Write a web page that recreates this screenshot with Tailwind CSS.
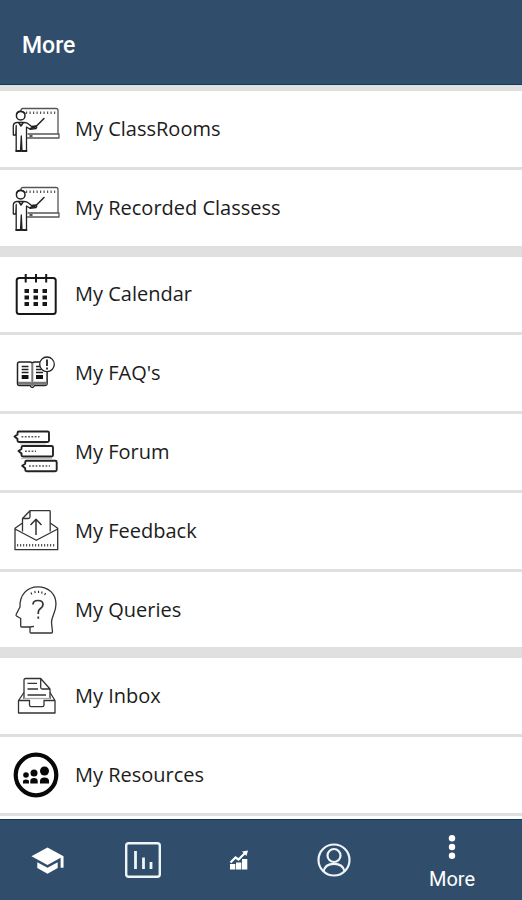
<!DOCTYPE html>
<html lang="en">
<head>
    <meta charset="UTF-8">
    <meta name="viewport" content="width=device-width, initial-scale=1.0">
    <script src="https://cdn.jsdelivr.net/npm/@tailwindcss/browser@4"></script>
    <title>More</title>
</head>
<body class="flex flex-col min-h-screen bg-white text-[#1c1c1c] font-['Open_Sans',sans-serif]">
<header class="flex items-center h-[85px] px-[22px] pt-2 bg-[#304e6b] border-b border-[#123a5c]">
    <h1 class="text-[23px] leading-7 font-medium text-white font-['Roboto',sans-serif]">More</h1>
</header>

<main class="flex flex-col flex-1 pb-[3px] bg-white border-t-6 border-[#e0dfdf]">
    <!-- Classes -->
    <a href="#" class="flex flex-1 items-center gap-[15px] pl-3 border-b-3 border-[#e0e0e0]">
        <svg class="size-12" viewBox="0 0 48 48" fill="none" stroke="#222" stroke-width="1.3" stroke-linejoin="round" stroke-linecap="round">
            <path d="M9 5.5C9 4 10 3.5 11 3.5h33q2 0 2 2V29M16 29h31v4H15.500" stroke="#555"/>
            <path d="M14 7.700h30" stroke-width="2.500" stroke-dasharray="1.2 2.300" stroke="#555" stroke-linecap="butt"/>
            <path d="M18 31h2" stroke-width="1.500"/>
            <circle cx="8.700" cy="10.700" r="4.300" fill="#fff" stroke-width="1.500"/>
            <path d="M4.500 9q1.200-3 4.200-2.800t4.300 2.300" stroke-width="1.500"/>
            <path d="M5 17.500h7q3 0 4.500 1.500l3 2.500l4.500-.5q1.500.8 0 2.500l-6 .8l-3.500-2.300V46h-4.500l-.7-15l-.8 15H4.200V20.500l-.4 9.500H1.300v-9q0-3 3.700-3.500z" fill="#fff"/>
            <path d="M7 18l2 3l2-3M20 22.200l4-.7l8-8M18 23.500l5-1" stroke-width="1.500"/>
            <path d="M4.200 46h4.300M10 46h4.500" stroke-width="1.800"/>
        </svg>
        <span class="text-[20px] leading-7">My ClassRooms</span>
    </a>
    <a href="#" class="flex flex-1 items-center gap-[15px] pl-3 border-b-11 border-[#e0e0e0]">
        <svg class="size-12" viewBox="0 0 48 48" fill="none" stroke="#222" stroke-width="1.3" stroke-linejoin="round" stroke-linecap="round">
            <path d="M9 5.5C9 4 10 3.5 11 3.5h33q2 0 2 2V29M16 29h31v4H15.500" stroke="#555"/>
            <path d="M14 7.700h30" stroke-width="2.500" stroke-dasharray="1.2 2.300" stroke="#555" stroke-linecap="butt"/>
            <path d="M18 31h2" stroke-width="1.500"/>
            <circle cx="8.700" cy="10.700" r="4.300" fill="#fff" stroke-width="1.500"/>
            <path d="M4.500 9q1.200-3 4.200-2.800t4.300 2.300" stroke-width="1.500"/>
            <path d="M5 17.500h7q3 0 4.500 1.500l3 2.500l4.500-.5q1.500.8 0 2.500l-6 .8l-3.500-2.300V46h-4.500l-.7-15l-.8 15H4.200V20.500l-.4 9.500H1.300v-9q0-3 3.700-3.500z" fill="#fff"/>
            <path d="M7 18l2 3l2-3M20 22.200l4-.7l8-8M18 23.500l5-1" stroke-width="1.500"/>
            <path d="M4.200 46h4.300M10 46h4.500" stroke-width="1.800"/>
        </svg>
        <span class="text-[20px] leading-7">My Recorded Classess</span>
    </a>

    <!-- Communication -->
    <a href="#" class="flex flex-1 items-center gap-[15px] pl-3 border-b-3 border-[#e0e0e0]">
        <svg class="size-12" viewBox="0 0 48 48" fill="none" stroke="#181818" stroke-width="2">
            <rect x="4.700" y="8" width="39" height="36" rx="2.500"/>
            <path d="M13.700 4V12.500M24 4V12.500M34.200 4V12.500"/>
            <path d="M12.500 21h22.500M12.500 27.500h22.500M12.500 34h22.500" stroke-width="4" stroke-dasharray="4.500 4.500"/>
        </svg>
        <span class="text-[20px] leading-7">My Calendar</span>
    </a>
    <a href="#" class="flex flex-1 items-center gap-[15px] pl-3 border-b-3 border-[#e0e0e0]">
        <svg class="size-12" viewBox="0 0 48 48" fill="none" stroke="#222" stroke-width="1.500">
            <path d="M20.300 14q-1-1-3-1H7.500q-2 0-2 2v19.500q0 2 2 2H18q1 2 2.300 2t2.300-2h10q2.500 0 2.500-2V14.500q0-1.500-2-1.500h-10q-2 0-2.800 1z"/>
            <path d="M6 33.500h12.500l1.800 1.500l1.800-1.500H35M6 35h12.500l1.800 1.500l1.800-1.500H35" stroke="#777"/>
            <path d="M20.300 14v22" stroke="#777" stroke-width="2"/>
            <path d="M9.700 17.500h6.800M9.700 20.500h6.800M9.700 23.500h6.800M24 17.500h4M24 20.500h5M24 23.500h7" stroke-width="1.300"/>
            <path d="M9.700 28h6.800M24 28h7" stroke="#111" stroke-width="4"/>
            <circle cx="35" cy="15.300" r="7.300" fill="#fff" stroke-width="1.300"/>
            <path d="M35 10.500v6.500M35 18.500v2" stroke-width="1.800"/>
        </svg>
        <span class="text-[20px] leading-7">My FAQ's</span>
    </a>
    <a href="#" class="flex flex-1 items-center gap-[15px] pl-3 border-b-3 border-[#e0e0e0]">
        <svg class="size-12" viewBox="0 0 48 48" fill="none" stroke="#222" stroke-width="1.900" stroke-linejoin="round">
            <path d="M7 3.500h28.500q1.500 0 1.500 1.500v7.500q0 1.500-1.500 1.500H7q-1.500 0-1.500-1.500v-1.500L2.500 8.500l3-2V5q0-1.500 1.500-1.500z"/>
            <path d="M11 18h28.500q1.500 0 1.500 1.500V27q0 1.500-1.500 1.500H11q-1.500 0-1.500-1.500v-1.500L6.500 23l3-2v-1.500q0-1.500 1.500-1.500z"/>
            <path d="M14.700 32.700h28.500q1.500 0 1.500 1.500v7.500q0 1.500-1.500 1.500H14.700q-1.500 0-1.500-1.500v-1.500l-3-2.500l3-2v-1.500q0-1.500 1.500-1.500z"/>
            <path d="M9.500 8.700h18M13 23.300h11M17 38h21" stroke-dasharray="1.800 1.500" stroke="#555" stroke-width="1.500"/>
            <path d="M9 30.600h31M8 16h26" stroke="#bbb" stroke-width="1"/>
        </svg>
        <span class="text-[20px] leading-7">My Forum</span>
    </a>
    <a href="#" class="flex flex-1 items-center gap-[15px] pl-3 border-b-3 border-[#e0e0e0]">
        <svg class="size-12" viewBox="0 0 48 48" fill="none" stroke="#333" stroke-width="1.300" stroke-linejoin="round">
            <path d="M10.500 24.500V11.500L18 3.700h19.500q.7 0 .7.800v20M18 3.700v6q0 1.800-1.800 1.800h-5.700"/>
            <path d="M10.500 16L3 21.300V42.700h42.700V21.300L38.200 16M3 22l21.300 11.300L45.700 22"/>
            <path d="M24 12.300V28M18.500 18L24 12.300L29.500 18" stroke-width="1.500"/>
            <path d="M5 38.300h39" stroke-dasharray="1.200 1.800" stroke-width="2.500" stroke="#555"/>
        </svg>
        <span class="text-[20px] leading-7">My Feedback</span>
    </a>
    <a href="#" class="flex flex-1 items-center gap-[15px] pl-3 border-b-11 border-[#e0e0e0]">
        <svg class="size-12" viewBox="0 0 48 48" fill="none" stroke="#333" stroke-width="1.300" stroke-linejoin="round">
            <path d="M22 40.300l-4 .7H9.700q-1 0-1-1v-7.500L4.500 30q-.8-.8-.3-1.700L8 21C7.500 9 15 .8 26 .8c10.500 0 18 7.200 18 17.200c0 9-4.500 12-4.500 18.500l1 9.500q0 1-1 1H19q-1 0-1-1v-5"/>
            <path d="M21 18.500q0-4 5-4t5 4q0 2.500-2.500 4q-2.200 1.500-2.200 3.500v2M26.300 30.500v2.300" stroke-width="1.700"/>
            <path d="M19 6.500l.8 2M22.700 5l.5 2.200M26.500 4.700V7M30 5.500l-.3 2.200M33.500 7l-.8 2" stroke-width="1.200"/>
        </svg>
        <span class="text-[20px] leading-7">My Queries</span>
    </a>

    <!-- Files -->
    <a href="#" class="flex flex-1 items-center gap-[15px] pl-3 border-b-3 border-[#e0e0e0]">
        <svg class="size-12" viewBox="0 0 48 48" fill="none" stroke="#333" stroke-width="1.300" stroke-linejoin="round">
            <path d="M12 27V8q0-1.500 1.500-1.500h15.200l9.300 10.500v10M28.700 6.500V15.500q0 1.500 1.500 1.500H38"/>
            <path d="M12 20.500L6.500 28.500V41H43V28.500L38 20.500M6.500 28.500h11v4.500q0 1.700 1.700 1.700h11q1.800 0 1.800-1.700v-4.500h11"/>
            <path d="M12 26.500h26" stroke="#aaa"/>
            <path d="M15.500 11.300h9.500M15.500 17h10.500M15.500 23h18.500"/>
        </svg>
        <span class="text-[20px] leading-7">My Inbox</span>
    </a>
    <a href="#" class="flex flex-1 items-center gap-[15px] pl-3 border-b-3 border-[#e0e0e0]">
        <svg class="size-12" viewBox="0 0 48 48" fill="#080808">
            <circle cx="24" cy="24" r="20.300" fill="none" stroke="#080808" stroke-width="4.200"/>
            <circle cx="14" cy="24" r="2.800"/>
            <circle cx="22" cy="22" r="3.500"/>
            <circle cx="32.500" cy="20" r="4.500"/>
            <path d="M11 32.500v-2q0-2 3-2t3 2v2zM18.300 32.500v-2.500q0-3 3.700-3t3.700 3v2.500zM28 32.500v-2.500q0-3.500 4.500-3.500t4.500 3.500v2.500z"/>
        </svg>
        <span class="text-[20px] leading-7">My Resources</span>
    </a>
</main>

<nav class="sticky bottom-0 grid grid-cols-[repeat(4,1fr)_140px] items-center h-[81px] bg-[#304e6b] border-t border-[#123a5c] text-white">
    <a href="#" aria-label="Classes" class="flex justify-center">
        <svg class="size-[35px]" viewBox="0 0 24 24" fill="currentColor">
            <path d="M5 13.180v4L12 21l7-3.820v-4L12 17l-7-3.820zM12 3L1 9l11 6 9-4.910V17h2V9L12 3z"/>
        </svg>
    </a>
    <a href="#" aria-label="Reports" class="flex justify-center">
        <svg class="size-9" viewBox="0 0 36 36" fill="none" stroke="#eef4f8" stroke-width="2.400">
            <rect x="1.200" y="1.200" width="33.600" height="33.600" rx="2.500"/>
            <path d="M10.500 9v18M18.500 15.500V27M26 20v7" stroke-width="2.800"/>
        </svg>
    </a>
    <a href="#" aria-label="Progress" class="flex justify-center">
        <svg class="size-5" viewBox="0 0 20 20" fill="currentColor">
            <path d="M1 14h5.300V19.500H1zM7 12.500h5.300V19.500H7zM13 9h5.300V19.500h-5.300z"/>
            <path d="M1.500 12.500L6.500 7.500l3 2L16 3" fill="none" stroke="currentColor" stroke-width="2.200"/>
            <path d="M13 1.500l6-1l-1.500 5.500z"/>
        </svg>
    </a>
    <a href="#" aria-label="Profile" class="flex justify-center">
        <svg class="size-[34px]" viewBox="0 0 34 34" fill="none" stroke="#eef4f8" stroke-width="2.200">
            <circle cx="17" cy="17" r="15.500"/>
            <circle cx="17" cy="12.500" r="6.500"/>
            <path d="M6.500 28.300q1.500-7.500 10.500-7.500t10.500 7.500"/>
        </svg>
    </a>
    <a href="#" class="flex flex-col items-center gap-1.5 pt-2">
        <svg class="w-2 h-6" viewBox="0 0 8 24" fill="currentColor">
            <circle cx="4" cy="3.200" r="3.200"/>
            <circle cx="4" cy="12" r="3.200"/>
            <circle cx="4" cy="20.800" r="3.200"/>
        </svg>
        <span class="text-[20px] leading-7 font-['Roboto',sans-serif]">More</span>
    </a>
</nav>
</body>
</html>
